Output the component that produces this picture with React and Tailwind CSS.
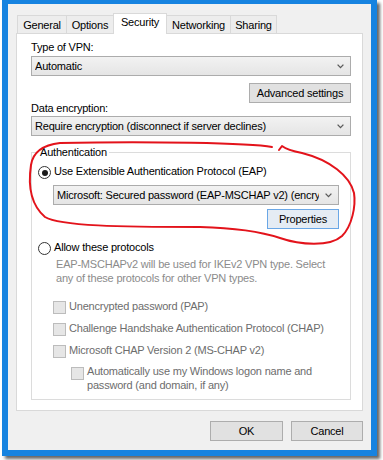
import React from 'react';

const Chevron = () => (
  <svg width="7" height="5" viewBox="0 0 7 5" className="shrink-0">
    <path d="M0.6 0.6 L3.5 3.6 L6.4 0.6" fill="none" stroke="#5a5a5a" strokeWidth="1.3" />
  </svg>
);

const Select = ({ children, className = '' }) => (
  <div className={'flex h-[20px] min-w-0 items-center border border-[#acacac] bg-linear-to-b from-[#f2f2f2] to-[#e5e5e5] pl-[3px] pr-[6px] ' + className}>
    <span className="mr-[6px] min-w-0 flex-1 overflow-hidden whitespace-nowrap">{children}</span>
    <Chevron />
  </div>
);

const Button = ({ children, className = '' }) => (
  <div className={'flex h-[20px] items-center justify-center border ' + className}>{children}</div>
);

const Radio = ({ checked, children }) => (
  <div className="ml-[6px] flex items-start gap-[3px]">
    <span className="mt-[2px] flex h-[13px] w-[13px] items-center justify-center rounded-full border border-[#333] bg-white">
      {checked && <span className="h-[6px] w-[6px] rounded-full bg-[#1a1a1a]" />}
    </span>
    <span>{children}</span>
  </div>
);

const Check = ({ children, className = '' }) => (
  <div className={'flex items-start gap-[3px] text-[#6d6d6d] ' + className}>
    <span className="mt-[2px] h-[13px] w-[13px] shrink-0 border border-[#bcbcbc] bg-[#e6e6e6]" />
    <span>{children}</span>
  </div>
);

const tabs = [
  ['General', 50],
  ['Options', 48],
  ['Security', 54],
  ['Networking', 65],
  ['Sharing', 47],
];

export default function App() {
  return (
    <div className="relative h-[460px] w-[383px] overflow-hidden bg-white font-['Liberation_Sans',Arial,sans-serif] text-[11px] leading-[14px] tracking-[-0.2px] text-black">
      <div className="ml-[2px] h-[456px] w-[375px] border-t-[4px] border-r-[6px] border-b-[6px] border-l-[6px] border-[#1683e0] bg-[#f0f0f0] shadow-[3px_3px_3px_rgba(0,0,0,0.6)]">
        <div className="flex flex-col px-2 pt-[9px]">
          {/* tabs */}
          <div className="flex h-[20px] items-end pl-px">
            {tabs.map(([name, w], i) => {
              const sel = name === 'Security';
              return (
                <div
                  key={name}
                  style={{ width: w }}
                  className={
                    (i > 0 ? '-ml-px ' : '') +
                    (sel
                      ? 'relative z-10 -mb-px h-[21px] border-x border-t border-[#d9d9d9] bg-white pt-px text-center'
                      : 'h-[18px] border-x border-t border-[#d9d9d9] bg-[#ededed] pt-[2px] text-center')
                  }
                >
                  {name}
                </div>
              );
            })}
          </div>

          {/* panel */}
          <div className="flex h-[378px] min-w-0 flex-col border border-[#d9d9d9] bg-white pr-[11px] pl-[14px]">
            <div className="mt-[6px]">Type of VPN:</div>
            <Select className="mt-[2px]">Automatic</Select>
            <Button className="mt-[7px] w-[102px] self-end border-[#adadad] bg-[#e1e1e1]">Advanced settings</Button>
            <div className="-mt-[2px]">Data encryption:</div>
            <Select className="mt-px">Require encryption (disconnect if server declines)</Select>

            <fieldset className="mt-[9px] min-w-0 border border-[#dcdcdc] pb-[7px]">
              <legend className="ml-[6px] px-[2px]">Authentication</legend>
              <div className="mt-[5px]">
                <Radio checked>Use Extensible Authentication Protocol (EAP)</Radio>
              </div>
              <div className="mt-[6px] mr-[11px] ml-[21px] flex min-w-0 flex-col">
                <Select>Microsoft: Secured password (EAP-MSCHAP v2) (encryption enabled)</Select>
                <Button className="mt-[4px] w-[72px] self-end border-[#6aa7e6] bg-[#e5ecf4]">Properties</Button>
              </div>
              <div className="mt-[11px]">
                <Radio>Allow these protocols</Radio>
              </div>
              <div className="mt-[3px] ml-[24px] leading-[13.5px] text-[#8b8b8b]">
                EAP-MSCHAPv2 will be used for IKEv2 VPN type. Select
                <br />
                any of these protocols for other VPN types.
              </div>
              <Check className="mt-[14px] ml-[21px]">Unencrypted password (PAP)</Check>
              <Check className="mt-[7px] ml-[21px]">Challenge Handshake Authentication Protocol (CHAP)</Check>
              <Check className="mt-[7px] ml-[21px]">Microsoft CHAP Version 2 (MS-CHAP v2)</Check>
              <Check className="mt-[7px] ml-[39px] leading-[13.5px]">
                Automatically use my Windows logon name and
                <br />
                password (and domain, if any)
              </Check>
            </fieldset>
          </div>

          {/* dialog buttons */}
          <div className="mt-[10px] flex justify-end gap-2">
            <Button className="w-[73px] border-[#adadad] bg-[#e1e1e1]">OK</Button>
            <Button className="w-[72px] border-[#adadad] bg-[#e1e1e1]">Cancel</Button>
          </div>
        </div>
      </div>

      {/* red hand-drawn annotation */}
      <svg className="pointer-events-none absolute top-0 left-0" width="383" height="460" viewBox="0 0 383 460">
        <path
          d="M272 147 C250 143 150 141 60 143 C42 145 33 152 31 165 C28 185 31 205 45 217 C60 226 120 227 200 227 C240 228 262 232 280 238 C300 245 330 247 342 236 C352 226 356 206 354 193 C350 176 330 160 302 153 C292 151 286 149 282 146 L279 150"
          fill="none"
          stroke="#e3131b"
          strokeWidth="2"
          strokeLinecap="round"
          strokeLinejoin="round"
        />
      </svg>
    </div>
  );
}
